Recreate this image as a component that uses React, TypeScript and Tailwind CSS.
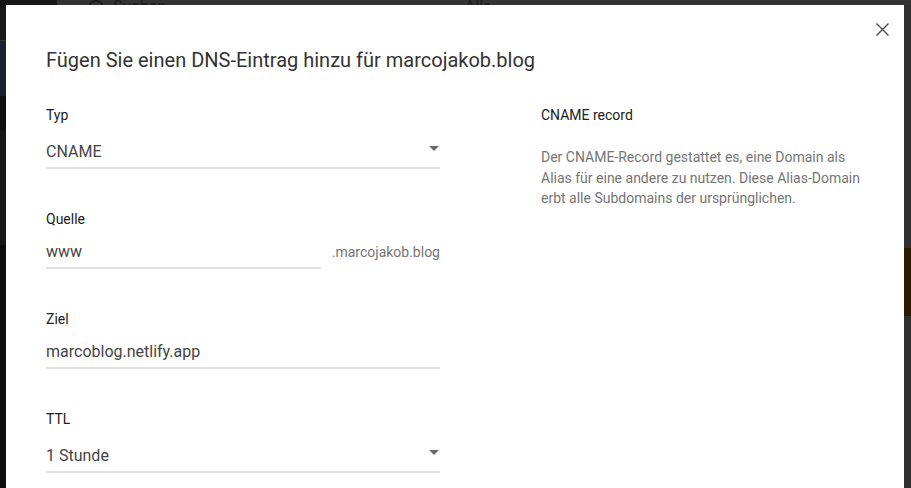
import React from 'react';

type FieldProps = {
  label: string;
  value: string;
  select?: boolean;
  suffix?: string;
};

function Field({ label, value, select, suffix }: FieldProps) {
  return (
    <div>
      <div className="text-[14px] leading-4 text-[#212121]">{label}</div>
      <div className={`flex items-baseline ${select ? 'mt-[19px]' : 'mt-[15px]'}`}>
        <div className="flex flex-1 items-start border-b-2 border-[#e2e2e2] pb-[5px]">
          <span className="flex-1 text-base leading-5 text-[#444]">{value}</span>
          {select && (
            <span className="mt-[4px] mr-[1px] h-0 w-0 border-x-[5px] border-t-[5px] border-x-transparent border-t-[#6b6b6b]" />
          )}
        </div>
        {suffix && <span className="ml-[11px] text-[14px] leading-4 text-[#757575]">{suffix}</span>}
      </div>
    </div>
  );
}

export default function App() {
  return (
    <div className="relative h-[488px] w-[911px] overflow-hidden bg-[#0e0e0e] font-['Roboto',sans-serif]">
      {/* page behind the dialog */}
      <div className="flex h-[5px] overflow-hidden bg-[#333]">
        <div className="w-[57px] bg-[#161616]" />
        <div className="flex flex-1 items-end gap-[9px] pl-[31px] text-[16px] leading-none text-[#1b1b1b]">
          <span className="mb-[-11px] h-4 w-4 rounded-full border-2 border-[#1b1b1b]" />
          <span className="mb-[-10px]">Suchen</span>
          <span className="mb-[-10px] ml-[290px]">Alle</span>
        </div>
      </div>
      <div className="flex h-[483px]">
        <div className="flex w-[6px] flex-col">
          <div className="h-[35px] bg-[#181818]" />
          <div className="h-[1px] bg-[#333]" />
          <div className="h-[55px] bg-[#1c2031]" />
          <div className="h-[34px] bg-[#101010]" />
          <div className="h-[115px] bg-[#171717]" />
          <div className="flex-1 bg-[#0d0d0d]" />
        </div>
        <div className="flex-1" />
        <div className="flex w-[7px] flex-col bg-[#2f2f2f]">
          <div className="h-[243px]" />
          <div className="h-[68px] bg-[#2b1a02]" />
        </div>
      </div>

      {/* dialog */}
      <div className="absolute left-[6px] top-[5px] h-[520px] w-[898px] bg-white px-10 pt-[41px]">
        <button className="absolute right-[15px] top-[18px] text-[#4a4a4a]">
          <svg width="13" height="13" viewBox="0 0 13 13" fill="none" stroke="currentColor" strokeWidth="1.4">
            <path d="M0.5 0.5L12.5 12.5M12.5 0.5L0.5 12.5" />
          </svg>
        </button>

        <h2 className="text-[20px] leading-7 text-[#333]">Fügen Sie einen DNS-Eintrag hinzu für marcojakob.blog</h2>

        <div className="mt-[33px] flex gap-[101px]">
          <div className="flex w-[394px] flex-col gap-[42px]">
            <Field label="Typ" value="CNAME" select />
            <Field label="Quelle" value="www" suffix=".marcojakob.blog" />
            <Field label="Ziel" value="marcoblog.netlify.app" />
            <Field label="TTL" value="1 Stunde" select />
          </div>
          <div className="flex-1">
            <div className="text-[14px] leading-4 text-[#212121]">CNAME record</div>
            <p className="mt-6 text-[14px] leading-[20.5px] text-[#757575]">
              Der CNAME-Record gestattet es, eine Domain als Alias für eine andere zu nutzen. Diese Alias-Domain erbt alle Subdomains der ursprünglichen.
            </p>
          </div>
        </div>
      </div>
    </div>
  );
}
